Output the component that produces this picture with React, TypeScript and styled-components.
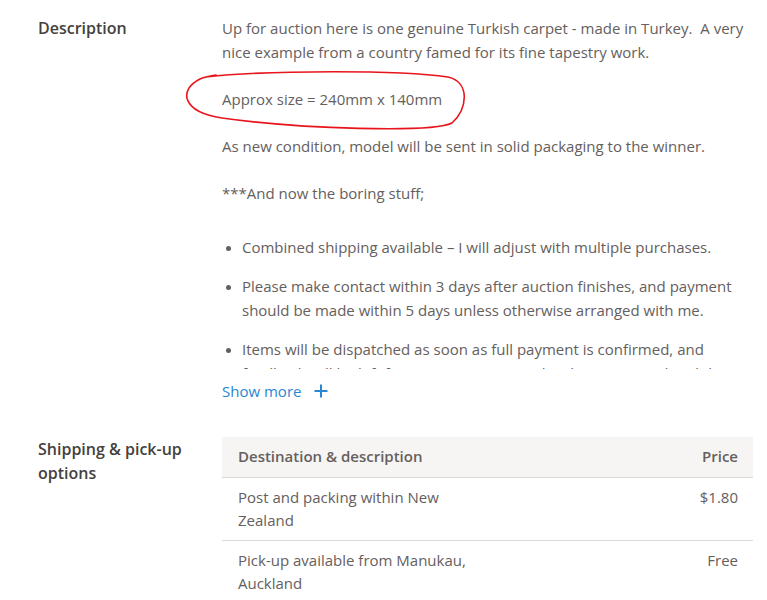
import React from "react";
import styled, { createGlobalStyle } from "styled-components";

const Global = createGlobalStyle`
  html, body { margin: 0; padding: 0; background: #ffffff; }
  body { font-family: "Open Sans", "Noto Sans", sans-serif; -webkit-font-smoothing: antialiased; }
  * { box-sizing: border-box; }
`;

const Page = styled.div`
  position: relative;
  width: 767px;
  padding: 16px 14px 0 38px;
`;

const Section = styled.section<{ $gap?: number }>`
  display: grid;
  grid-template-columns: 184px 1fr;
  margin-bottom: ${(p) => p.$gap ?? 0}px;
`;

const Label = styled.h2`
  margin: 0;
  font-size: 16px;
  line-height: 24px;
  font-weight: 600;
  color: #44413d;
`;

const Clip = styled.div`
  height: 353px;
  overflow: hidden;
`;

const Para = styled.p`
  margin: 0 0 23px;
  font-size: 15px;
  line-height: 24px;
  color: #65605d;
`;

const List = styled.ul`
  margin: 30px 0 0;
  padding-left: 20px;
  color: #65605d;
`;

const Item = styled.li`
  font-size: 15px;
  line-height: 24px;
  margin-bottom: 15px;
  &::marker { font-size: 13px; }
`;

const ShowMore = styled.button`
  display: inline-flex;
  align-items: center;
  gap: 13px;
  margin-top: 10px;
  padding: 0;
  border: 0;
  background: none;
  font-family: inherit;
  font-size: 15px;
  line-height: 24px;
  color: #2a86d2;
  cursor: pointer;
`;

const Table = styled.div`
  display: grid;
  grid-template-columns: 270px 1fr;
`;

const Cell = styled.div<{ $head?: boolean; $right?: boolean; $last?: boolean }>`
  font-size: 15px;
  line-height: 23px;
  color: #65605d;
  font-weight: ${(p) => (p.$head ? 600 : 400)};
  background: ${(p) => (p.$head ? "#f6f5f4" : "transparent")};
  padding: ${(p) => (p.$head ? "8px 15px 9px 16px" : "8px 15px 8px 16px")};
  text-align: ${(p) => (p.$right ? "right" : "left")};
  border-bottom: ${(p) => (p.$last ? "none" : "1px solid #dcdad8")};
`;

const Ring = styled.svg`
  position: absolute;
  left: 0;
  top: 0;
  pointer-events: none;
`;

const Plus = () => (
  <svg width="14" height="14" viewBox="0 0 14 14" fill="none">
    <path d="M7 0.5v13M0.5 7h13" stroke="#2a86d2" strokeWidth="2" />
  </svg>
);

export default function App() {
  return (
    <>
      <Global />
      <Page>
        <Section $gap={34}>
          <Label>Description</Label>
          <div>
            <Clip>
              <Para>
                Up for auction here is one genuine Turkish carpet - made in Turkey.&nbsp; A very nice example
                from a country famed for its fine tapestry work.
              </Para>
              <Para>Approx size = 240mm x 140mm</Para>
              <Para>As new condition, model will be sent in solid packaging to the winner.</Para>
              <Para>***And now the boring stuff;</Para>
              <List>
                <Item>Combined shipping available – I will adjust with multiple purchases.</Item>
                <Item>
                  Please make contact within 3 days after auction finishes, and payment should be made within 5
                  days unless otherwise arranged with me.
                </Item>
                <Item>
                  Items will be dispatched as soon as full payment is confirmed, and feedback will be left for you
                  once payment has been received and the item dispatched.
                </Item>
              </List>
            </Clip>
            <ShowMore>
              Show more <Plus />
            </ShowMore>
          </div>
        </Section>
        <Section>
          <Label>Shipping &amp; pick-up options</Label>
          <Table>
            <Cell $head>Destination &amp; description</Cell>
            <Cell $head $right>
              Price
            </Cell>
            <Cell>Post and packing within New Zealand</Cell>
            <Cell $right>$1.80</Cell>
            <Cell $last>Pick-up available from Manukau, Auckland</Cell>
            <Cell $last $right>
              Free
            </Cell>
          </Table>
        </Section>
        <Ring width="767" height="160" viewBox="0 0 767 160">
          <path
            d="M206 77 C 270 70, 400 70, 448 77 C 470 82, 468 108, 452 123 C 432 133, 300 129, 222 118 C 182 112, 178 90, 200 79 C 204 77, 210 76, 216 75"
            fill="none"
            stroke="#e8141b"
            strokeWidth="1.6"
            strokeLinecap="round"
          />
        </Ring>
      </Page>
    </>
  );
}
